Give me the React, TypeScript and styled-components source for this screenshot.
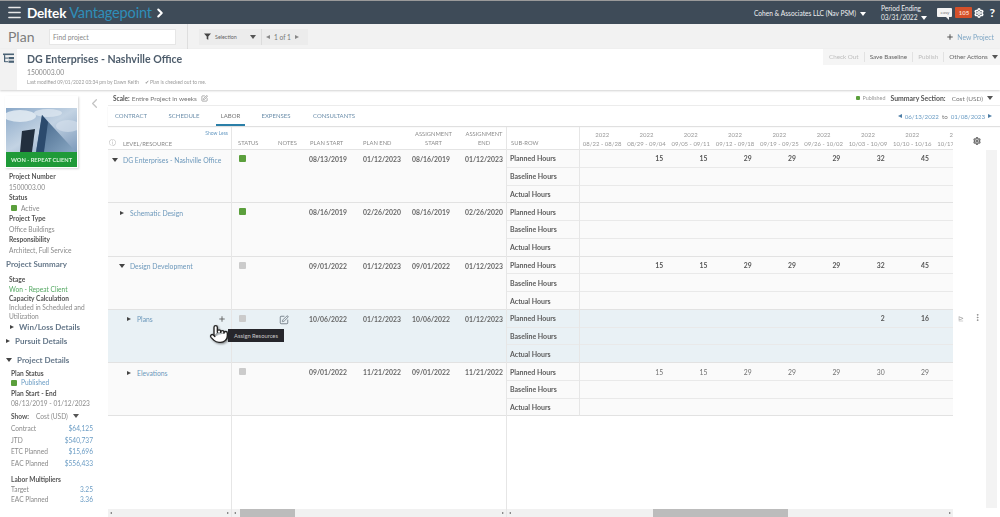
import React from 'react';
import styled, { createGlobalStyle } from 'styled-components';
import {
	ChevronLeft,
	ChevronRight,
	Menu,
	MoreVertical,
	Plus,
	Pointer,
	Settings,
	SquarePen,
} from 'lucide-react';

const GlobalStyle = createGlobalStyle`
	html, body {
		margin: 0;
		padding: 0;
		background: #fff;
	}
	body {
		font-family: Lato, "Noto Sans", Arial, sans-serif;
		color: #555;
	}
	* {
		box-sizing: border-box;
	}
`;

const Page = styled.div`
	display: flex;
	filter: blur(0.35px);
	flex-direction: column;
	height: 517px;
	overflow: hidden;
	position: relative;
	width: 1000px;
`;

/* top bar */
const TopBar = styled.div`
	align-items: center;
	background: #3e4b58;
	border-top: 1px solid #9a9a9a;
	color: #fff;
	display: flex;
	flex: none;
	height: 24px;
	padding: 0 5px 0 6px;
`;

const Brand = styled.div`
	font-size: 13.6px;
	font-weight: 700;
	letter-spacing: -0.2px;
	margin-left: 4px;
	white-space: nowrap;
`;

const BrandBlue = styled.span`
	color: #2f8eb8;
	font-size: 14.6px;
	font-weight: 400;
	margin-left: 3px;
`;

const Spacer = styled.div`
	flex: 1;
`;

const Company = styled.div`
	color: #eef0f2;
	font-size: 6.6px;
	margin-right: 15px;
	white-space: nowrap;
`;

const Period = styled.div`
	color: #eef0f2;
	font-size: 6.6px;
	line-height: 9px;
	margin-right: 10px;
	white-space: nowrap;
`;

const Caret = styled.span`
	border-left: 3px solid transparent;
	border-right: 3px solid transparent;
	border-top: 4px solid ${(props) => props.color || '#fff'};
	display: inline-block;
	margin-left: 4px;
	vertical-align: 0;
`;

const Bubble = styled.div`
	background: #f4f4f4;
	border-radius: 1px;
	color: #777;
	font-size: 4.5px;
	height: 9px;
	line-height: 9px;
	margin-right: 3px;
	position: relative;
	text-align: center;
	width: 15px;
	&::after {
		border-left: 3px solid transparent;
		border-top: 3px solid #f4f4f4;
		bottom: -3px;
		content: '';
		position: absolute;
		right: 3px;
	}
`;

const Badge = styled.div`
	background: #d5502a;
	border-radius: 1px;
	color: #fbd5c4;
	font-size: 6px;
	font-weight: 700;
	height: 11px;
	line-height: 11px;
	margin-right: 2px;
	text-align: center;
	width: 17px;
`;

const Help = styled.div`
	font-size: 12px;
	font-weight: 700;
	margin-left: 5px;
`;

/* plan bar */
const PlanBar = styled.div`
	align-items: center;
	background: #f2f2f2;
	display: flex;
	flex: none;
	height: 25px;
	padding-left: 8px;
`;

const PlanTitle = styled.div`
	color: #7c7c7c;
	font-size: 14px;
	width: 41px;
`;

const Search = styled.div`
	align-items: center;
	background: #fff;
	border: 1px solid #e6e6e6;
	color: #888;
	display: flex;
	font-size: 6.8px;
	height: 16px;
	padding-left: 3px;
	width: 127px;
`;

const Divider = styled.div`
	background: #dedede;
	height: 25px;
	margin: 0 11px;
	width: 1px;
`;

const FilterGroup = styled.div`
	align-items: center;
	background: #ececec;
	color: #666;
	display: flex;
	font-size: 5.4px;
	height: 16px;
	padding: 0 5px 0 5px;
	width: 62px;
`;

const Pager = styled.div`
	align-items: center;
	background: #ececec;
	border-left: 1px solid #dcdcdc;
	color: #777;
	display: flex;
	font-size: 6.6px;
	gap: 4px;
	height: 16px;
	padding-left: 4px;
	width: 47px;
`;

const TriLeft = styled.span`
	border-bottom: 2.5px solid transparent;
	border-right: 4px solid ${(props) => props.color || '#888'};
	border-top: 2.5px solid transparent;
	display: inline-block;
`;

const TriRight = styled.span`
	border-bottom: 2.5px solid transparent;
	border-left: 4px solid ${(props) => props.color || '#888'};
	border-top: 2.5px solid transparent;
	display: inline-block;
`;

const NewProject = styled.div`
	align-items: center;
	color: #7fa6c4;
	display: flex;
	font-size: 6.8px;
	gap: 3px;
	margin-right: 6px;
`;

/* project bar */
const ProjectBar = styled.div`
	background: #fff;
	box-shadow: 0 1px 2px rgba(0, 0, 0, 0.18);
	display: flex;
	flex: none;
	height: 41px;
	position: relative;
`;

const TreeTab = styled.div`
	background: #f2f2f2;
	flex: none;
	height: 41px;
	padding: 4px 0 0 3px;
	width: 17px;
	svg {
		display: block;
	}
`;

const ProjectInfo = styled.div`
	flex: 1;
	padding: 2px 0 0 10px;
`;

const ProjectName = styled.div`
	color: #4e5d6c;
	font-size: 10.6px;
	font-weight: 700;
	line-height: 16px;
`;

const ProjectNumber = styled.div`
	color: #888;
	font-size: 6.8px;
	line-height: 11px;
`;

const Modified = styled.div`
	color: #999;
	display: flex;
	font-size: 4.9px;
	gap: 6px;
	line-height: 9px;
`;

const Actions = styled.div`
	align-items: center;
	align-self: flex-start;
	background: #f5f5f5;
	display: flex;
	font-size: 6.3px;
	height: 16px;
	padding-left: 6px;
	width: 177px;
`;

const Action = styled.div<{ $off?: boolean }>`
	border-right: 1px solid #e2e2e2;
	color: ${(props) => (props.$off ? '#bdbdbd' : '#666')};
	line-height: 10px;
	margin-right: 5px;
	padding-right: 5px;
	white-space: nowrap;
	&:last-child {
		border-right: none;
		margin-right: 0;
		padding-right: 0;
	}
`;

/* body */
const Body = styled.div`
	display: flex;
	flex: 1;
	min-height: 0;
`;

const Sidebar = styled.div`
	flex: none;
	width: 108px;
`;

const SidebarTop = styled.div`
	display: flex;
`;

const HeroCard = styled.div`
	background: #fff;
	box-shadow: 1px 1px 2px rgba(0, 0, 0, 0.16);
	flex: none;
	height: 72px;
	margin: 6px 0 0 5px;
	padding: 12px 1px 0;
	width: 73px;
`;

const Banner = styled.div`
	background: #1f9a38;
	color: #d9f3dc;
	font-size: 5.7px;
	font-weight: 700;
	height: 15px;
	line-height: 15px;
	text-align: center;
	white-space: nowrap;
`;

const Collapse = styled.div`
	color: #c4c4c4;
	margin: 5px 0 0 9px;
`;

const SideBlock = styled.div<{ $left?: number }>`
	padding-left: ${(props) => props.$left ?? 9}px;
	padding-right: 15px;
`;

const SideLabel = styled.div<{ $h?: number; $mt?: number }>`
	color: #555;
	font-size: 6.6px;
	font-weight: 700;
	line-height: ${(props) => props.$h ?? 10.5}px;
	margin-top: ${(props) => props.$mt ?? 0}px;
	white-space: nowrap;
`;

const SideValue = styled.div<{ $h?: number; $color?: string; $inset?: number }>`
	align-items: center;
	color: ${(props) => props.$color || '#8a8a8a'};
	display: flex;
	font-size: 6.6px;
	gap: 4px;
	line-height: ${(props) => props.$h ?? 10.5}px;
	padding-left: ${(props) => props.$inset ?? 0}px;
	white-space: nowrap;
`;

const SectionTitle = styled.div<{ $indent?: number; $h?: number }>`
	align-items: center;
	color: #66788a;
	display: flex;
	font-size: 8px;
	font-weight: 700;
	gap: 5px;
	height: ${(props) => props.$h ?? 17}px;
	padding-left: ${(props) => props.$indent ?? 6}px;
	white-space: nowrap;
`;

const ShowRow = styled.div`
	align-items: center;
	color: #8a8a8a;
	display: flex;
	font-size: 6.6px;
	gap: 5px;
	height: 10px;
	margin: 3px 0 2px;
`;

const MetricRow = styled.div<{ $h?: number }>`
	color: #8a8a8a;
	display: flex;
	font-size: 6.6px;
	height: ${(props) => props.$h ?? 11.7}px;
	justify-content: space-between;
	line-height: ${(props) => props.$h ?? 11.7}px;
`;

const MetricValue = styled.span`
	color: #6a9cc4;
`;

const StatusSquare = styled.span<{ $on?: boolean; $size?: number }>`
	background: ${(props) => (props.$on ? '#5b9f3c' : '#cbcbcb')};
	border-radius: 1px;
	display: inline-block;
	flex: none;
	height: ${(props) => props.$size ?? 7}px;
	width: ${(props) => props.$size ?? 7}px;
`;

/* main */
const Main = styled.div`
	display: flex;
	flex: 1;
	flex-direction: column;
	min-width: 0;
	padding-top: 1px;
`;

const ScaleRow = styled.div`
	align-items: center;
	border-bottom: 1px solid #ececec;
	color: #777;
	display: flex;
	flex: none;
	font-size: 6.5px;
	height: 15px;
	padding: 0 7px 0 5px;
`;

const Strong = styled.b`
	color: #555;
	font-weight: 700;
	margin-right: 2px;
`;

const Published = styled.div`
	align-items: center;
	color: #999;
	display: flex;
	font-size: 5.4px;
	gap: 2px;
	margin-right: 5px;
`;

const TabsRow = styled.div`
	align-items: stretch;
	box-shadow: 0 1px 1px rgba(0, 0, 0, 0.12);
	display: flex;
	flex: none;
	height: 20px;
	padding: 0 8px 0 2px;
`;

const Tab = styled.div<{ $active?: boolean; $width: number }>`
	align-items: center;
	border-bottom: 2px solid transparent;
	border-color: ${(props) => (props.$active ? '#2b7fa8' : 'transparent')};
	color: ${(props) => (props.$active ? '#777' : '#6d8fab')};
	display: flex;
	font-size: 6px;
	height: 20px;
	justify-content: center;
	margin-right: 11px;
	width: ${(props) => props.$width}px;
`;

const DateRange = styled.div`
	align-items: center;
	color: #777;
	display: flex;
	font-size: 6.2px;
	gap: 3px;
`;

const BlueText = styled.span`
	color: #6a9cc4;
`;

const TableArea = styled.div`
	display: flex;
	flex: 1;
	margin-top: 1px;
	min-height: 0;
`;

const Pane = styled.div<{ $width: number; $line?: boolean }>`
	border-right: ${(props) => (props.$line ? '1px solid #e6e6e6' : 'none')};
	display: flex;
	flex: none;
	flex-direction: column;
	overflow: hidden;
	width: ${(props) => props.$width}px;
`;

const HeaderCell = styled.div`
	border-bottom: 1px solid #e4e4e4;
	flex: none;
	height: 23px;
`;

const LevelHeader = styled(HeaderCell)`
	color: #888;
	display: grid;
	font-size: 5.8px;
	grid-template-columns: 15px 1fr;
	grid-template-rows: 11px 12px;
	padding: 0 3px 0 0;
`;

const ShowLess = styled.div`
	color: #6a9cc4;
	font-size: 5px;
	grid-column: 2;
	line-height: 13px;
	text-align: right;
`;

const InfoDot = styled.div`
	align-self: start;
	color: #aaa;
	font-size: 7px;
	grid-row: 2;
	line-height: 8px;
	padding-left: 1px;
`;

const LevelLabel = styled.div`
	align-self: center;
	grid-row: 2;
	line-height: 10px;
`;

const DetailGrid = styled.div`
	display: grid;
	grid-template-columns: 41px 32px 53px 49px 53px 48px;
`;

const DetailHeader = styled(HeaderCell)`
	align-items: end;
	color: #8d8d8d;
	display: grid;
	font-size: 5.8px;
	grid-template-columns: 41px 32px 53px 49px 53px 48px;
	line-height: 8.5px;
	padding-bottom: 2px;
`;

const HeadText = styled.div<{ $center?: boolean; $pad?: number }>`
	padding-left: ${(props) => props.$pad ?? 5}px;
	text-align: ${(props) => (props.$center ? 'center' : 'left')};
	white-space: nowrap;
`;

const Row = styled.div<{ $hover?: boolean }>`
	background: ${(props) => (props.$hover ? '#e9f1f5' : '#fafafa')};
	border-bottom: 1px solid #e2e2e2;
	flex: none;
	height: 53.3px;
`;

const LevelRow = styled(Row)`
	padding: 5px 5px 0 0;
`;

const LevelLine = styled.div<{ $indent: number }>`
	align-items: center;
	color: #6c98bb;
	display: flex;
	font-size: 6.8px;
	height: 9px;
	padding-left: ${(props) => props.$indent}px;
	white-space: nowrap;
`;

const ArrowBox = styled.span`
	align-items: center;
	display: flex;
	flex: none;
	justify-content: center;
	margin-right: 5px;
	width: 6px;
`;

const AddButton = styled.span`
	color: #555;
	display: flex;
	margin-left: auto;
`;

const DetailRow = styled(Row)`
	padding-top: 5px;
`;

const DateCell = styled.div<{ $pad: number }>`
	color: #666;
	font-size: 6.8px;
	font-weight: 700;
	line-height: 9px;
	padding-left: ${(props) => props.$pad}px;
	white-space: nowrap;
`;

const StatusCell = styled.div`
	display: flex;
	height: 9px;
	padding-left: 7px;
`;

const NotesCell = styled.div`
	color: #5a6570;
	display: flex;
	height: 9px;
	padding-left: 6px;
`;

const SubRows = styled(Row)`
	display: flex;
	flex-direction: column;
`;

const SubLabels = styled(SubRows)`
	border-right: 1px solid #e6e6e6;
`;

const SubRow = styled.div`
	align-items: center;
	border-bottom: 1px solid #e9e9e9;
	color: #5c5c5c;
	display: flex;
	flex: 1;
	font-size: 7px;
	font-weight: 700;
	min-height: 0;
	padding-left: 3px;
	white-space: nowrap;
	&:last-child {
		border-bottom: none;
	}
`;

const SubHeader = styled(HeaderCell)`
	align-items: flex-end;
	border-right: 1px solid #e6e6e6;
	color: #8d8d8d;
	display: flex;
	font-size: 5.8px;
	line-height: 8.5px;
	padding: 0 0 2px 4px;
`;

const WeekHeader = styled(HeaderCell)`
	display: grid;
	grid-template-columns: repeat(9, 44.3px);
	padding-top: 3px;
`;

const WeekCell = styled.div`
	color: #999;
	font-size: 6px;
	line-height: 9px;
	text-align: center;
	white-space: nowrap;
`;

const HoursLine = styled.div`
	border-bottom: 1px solid #e9e9e9;
	display: grid;
	flex: 1;
	grid-template-columns: repeat(9, 44.3px);
	min-height: 0;
	&:last-child {
		border-bottom: none;
	}
`;

const HoursCell = styled.div<{ $bold?: boolean }>`
	align-self: center;
	color: ${(props) => (props.$bold ? '#555' : '#707070')};
	font-size: 6.8px;
	font-weight: ${(props) => (props.$bold ? 700 : 400)};
	padding-right: 5.5px;
	text-align: right;
`;

const HScroll = styled.div<{ $from: number; $size: number }>`
	align-items: center;
	background: #f1f1f1;
	display: flex;
	flex: none;
	height: 8px;
	justify-content: space-between;
	margin-top: auto;
	padding: 0 2px;
	position: relative;
	&::before {
		background: #bcbcbc;
		content: '';
		display: ${(props) => (props.$size ? 'block' : 'none')};
		height: 8px;
		left: ${(props) => props.$from}px;
		position: absolute;
		top: 0;
		width: ${(props) => props.$size}px;
	}
`;

const ScrollLeft = styled.span`
	border-bottom: 1.5px solid transparent;
	border-right: 2px solid #666;
	border-top: 1.5px solid transparent;
`;

const ScrollRight = styled.span`
	border-bottom: 1.5px solid transparent;
	border-left: 2px solid #666;
	border-top: 1.5px solid transparent;
`;

const RightRail = styled.div`
	display: flex;
	flex: 1;
	min-width: 0;
	padding-top: 1px;
`;

const RailIcons = styled.div`
	color: #666;
	flex: 1;
`;

const RailGear = styled.div`
	display: flex;
	height: 22px;
	justify-content: center;
	padding: 9px 0 0 14px;
`;

const RailRow = styled.div`
	align-items: center;
	color: #8b8b8b;
	display: flex;
	gap: 9px;
	margin-top: 163px;
	padding-left: 5px;
`;

const ChartGlyph = styled.span`
	color: #a9a9a9;
	font-size: 7px;
	line-height: 8px;
`;

const VScroll = styled.div`
	background: #f3f3f3;
	flex: none;
	height: 358px;
	margin: 22px 3px 0 0;
	position: relative;
	width: 11px;
`;

/* overlays */
const Tooltip = styled.div`
	background: #26262b;
	color: #c9c9c9;
	font-size: 5.8px;
	height: 13px;
	left: 228px;
	line-height: 13px;
	position: absolute;
	text-align: center;
	top: 329px;
	width: 56px;
`;

const HandCursor = styled.div`
	filter: drop-shadow(1px 1px 1px rgba(0, 0, 0, 0.45));
	left: 209px;
	position: absolute;
	top: 324px;
`;

const weeks = [
	'08/22 - 08/28',
	'08/29 - 09/04',
	'09/05 - 09/11',
	'09/12 - 09/18',
	'09/19 - 09/25',
	'09/26 - 10/02',
	'10/03 - 10/09',
	'10/10 - 10/16',
	'10/17 - 10/23',
];

const subRowNames = ['Planned Hours', 'Baseline Hours', 'Actual Hours'];

interface PlanRow {
	name: string;
	indent: number;
	open?: boolean;
	on?: boolean;
	hover?: boolean;
	dates: string[];
	hours: (number | null)[];
	bold?: boolean;
}

const rows: PlanRow[] = [
	{
		name: 'DG Enterprises - Nashville Office',
		indent: 4,
		open: true,
		on: true,
		dates: ['08/13/2019', '01/12/2023', '08/16/2019', '01/12/2023'],
		hours: [null, 15, 15, 29, 29, 29, 32, 45, null],
		bold: true,
	},
	{
		name: 'Schematic Design',
		indent: 11,
		on: true,
		dates: ['08/16/2019', '02/26/2020', '08/16/2019', '02/26/2020'],
		hours: [],
	},
	{
		name: 'Design Development',
		indent: 11,
		open: true,
		dates: ['09/01/2022', '01/12/2023', '09/01/2022', '01/12/2023'],
		hours: [null, 15, 15, 29, 29, 29, 32, 45, null],
		bold: true,
	},
	{
		name: 'Plans',
		indent: 18,
		hover: true,
		dates: ['10/06/2022', '01/12/2023', '10/06/2022', '01/12/2023'],
		hours: [null, null, null, null, null, null, 2, 16, null],
		bold: true,
	},
	{
		name: 'Elevations',
		indent: 18,
		dates: ['09/01/2022', '11/21/2022', '09/01/2022', '11/21/2022'],
		hours: [null, 15, 15, 29, 29, 29, 30, 29, null],
	},
];

const datePads = [4, 5, 5, 5];

function Arrow({ open }: { open?: boolean }) {
	return (
		<ArrowBox>
			{open ? <Caret color="#444" style={{ marginLeft: 0 }} /> : <TriRight color="#444" />}
		</ArrowBox>
	);
}

function TreeIcon() {
	return (
		<svg width="11" height="11" viewBox="0 0 11 11" fill="#4a6275">
			<rect x="0" y="0.5" width="11" height="1.6" />
			<rect x="1" y="2.1" width="1.2" height="7" />
			<rect x="2" y="4.6" width="3" height="1" />
			<rect x="2" y="8.2" width="3" height="1" />
			<rect x="5.5" y="4" width="5.5" height="2.2" />
			<rect x="5.5" y="7.6" width="5.5" height="2.2" />
		</svg>
	);
}

function Building() {
	return (
		<svg width="71" height="44" viewBox="0 0 71 44" style={{ display: 'block' }}>
			<defs>
				<linearGradient id="sky" x1="0" y1="0" x2="1" y2="1">
					<stop offset="0" stopColor="#8aa8c8" />
					<stop offset="0.5" stopColor="#c3d3e3" />
					<stop offset="1" stopColor="#7d9abb" />
				</linearGradient>
				<linearGradient id="glass" x1="0" y1="0" x2="1" y2="1">
					<stop offset="0" stopColor="#3d5f84" />
					<stop offset="1" stopColor="#8ba9c4" />
				</linearGradient>
			</defs>
			<rect width="71" height="44" fill="url(#sky)" />
			<ellipse cx="14" cy="8" rx="16" ry="6" fill="#e4ecf3" opacity="0.85" />
			<ellipse cx="42" cy="5" rx="14" ry="4" fill="#dde7f0" opacity="0.75" />
			<ellipse cx="62" cy="18" rx="12" ry="6" fill="#d6e1ec" opacity="0.65" />
			<polygon points="16,23 29,21 26,44 14,44" fill="#222f3e" />
			<polygon points="36,7 70,44 30,44" fill="url(#glass)" />
			<polygon points="36,7 42,14 38,44 30,44" fill="#2b4a6d" />
		</svg>
	);
}

function ScrollEnds() {
	return (
		<>
			<ScrollLeft />
			<ScrollRight />
		</>
	);
}

export default function App() {
	return (
		<Page>
			<GlobalStyle />
			<TopBar>
				<Menu size={17} strokeWidth={2} color="#e8e8e8" />
				<Brand>
					Deltek<BrandBlue>Vantagepoint</BrandBlue>
				</Brand>
				<ChevronRight size={14} strokeWidth={3.5} style={{ marginLeft: 1 }} />
				<Spacer />
				<Company>
					Cohen &amp; Associates LLC (Nav PSM)
					<Caret />
				</Company>
				<Period>
					Period Ending
					<br />
					03/31/2022
					<Caret />
				</Period>
				<Bubble>easy</Bubble>
				<Badge>105</Badge>
				<Settings size={10} strokeWidth={3.5} />
				<Help>?</Help>
			</TopBar>

			<PlanBar>
				<PlanTitle>Plan</PlanTitle>
				<Search>Find project</Search>
				<Divider />
				<FilterGroup>
					<svg width="7" height="7" viewBox="0 0 7 7" fill="#444" style={{ marginRight: 4 }}>
						<polygon points="0,0.5 7,0.5 4.3,3.6 4.3,6.8 2.7,6 2.7,3.6" />
					</svg>
					Selection
					<Spacer />
					<Caret color="#555" />
				</FilterGroup>
				<Pager>
					<TriLeft />
					1 of 1
					<TriRight />
				</Pager>
				<Spacer />
				<NewProject>
					<Plus size={8} strokeWidth={3} color="#555" />
					New Project
				</NewProject>
			</PlanBar>

			<ProjectBar>
				<TreeTab>
					<TreeIcon />
				</TreeTab>
				<ProjectInfo>
					<ProjectName>DG Enterprises - Nashville Office</ProjectName>
					<ProjectNumber>1500003.00</ProjectNumber>
					<Modified>
						<span>Last modified 09/01/2022 03:34 pm by Dawn Keith</span>
						<span>✔ Plan is checked out to me.</span>
					</Modified>
				</ProjectInfo>
				<Actions>
					<Action $off>Check Out</Action>
					<Action>Save Baseline</Action>
					<Action $off>Publish</Action>
					<Action>
						Other Actions
						<Caret color="#555" />
					</Action>
				</Actions>
			</ProjectBar>

			<Body>
				<Sidebar>
					<SidebarTop>
						<HeroCard>
							<Building />
							<Banner>WON - REPEAT CLIENT</Banner>
						</HeroCard>
						<Collapse>
							<ChevronLeft size={15} strokeWidth={2} />
						</Collapse>
					</SidebarTop>
					<SideBlock>
						<SideLabel $mt={3}>Project Number</SideLabel>
						<SideValue>1500003.00</SideValue>
						<SideLabel>Status</SideLabel>
						<SideValue $inset={2}>
							<StatusSquare $on $size={6} />
							Active
						</SideValue>
						<SideLabel>Project Type</SideLabel>
						<SideValue>Office Buildings</SideValue>
						<SideLabel>Responsibility</SideLabel>
						<SideValue>Architect, Full Service</SideValue>
					</SideBlock>
					<SectionTitle>Project Summary</SectionTitle>
					<SideBlock>
						<SideLabel $mt={2}>Stage</SideLabel>
						<SideValue $h={9} $color="#54a862">
							Won - Repeat Client
						</SideValue>
						<SideLabel $h={9}>Capacity Calculation</SideLabel>
						<SideValue $h={9.5}>Included in Scheduled and</SideValue>
						<SideValue $h={9.5}>Utilization</SideValue>
					</SideBlock>
					<SectionTitle $indent={10} $h={10}>
						<TriRight color="#444" />
						Win/Loss Details
					</SectionTitle>
					<SectionTitle $h={19.5}>
						<TriRight color="#444" />
						Pursuit Details
					</SectionTitle>
					<SectionTitle $h={17}>
						<Caret color="#444" style={{ marginLeft: 0 }} />
						Project Details
					</SectionTitle>
					<SideBlock $left={11}>
						<SideLabel $h={10}>Plan Status</SideLabel>
						<SideValue $h={9} $color="#6a9cc4">
							<StatusSquare $on $size={6} />
							Published
						</SideValue>
						<SideLabel $h={10} $mt={1}>
							Plan Start - End
						</SideLabel>
						<SideValue $h={10}>08/13/2019 - 01/12/2023</SideValue>
						<ShowRow>
							<Strong>Show:</Strong>
							Cost (USD)
							<Caret color="#555" style={{ marginLeft: 0 }} />
						</ShowRow>
						<MetricRow>
							<span>Contract</span>
							<MetricValue>$64,125</MetricValue>
						</MetricRow>
						<MetricRow>
							<span>JTD</span>
							<MetricValue>$540,737</MetricValue>
						</MetricRow>
						<MetricRow>
							<span>ETC Planned</span>
							<MetricValue>$15,696</MetricValue>
						</MetricRow>
						<MetricRow>
							<span>EAC Planned</span>
							<MetricValue>$556,433</MetricValue>
						</MetricRow>
						<SideLabel $h={10} $mt={4}>
							Labor Multipliers
						</SideLabel>
						<MetricRow $h={10.5}>
							<span>Target</span>
							<MetricValue>3.25</MetricValue>
						</MetricRow>
						<MetricRow $h={11.5}>
							<span>EAC Planned</span>
							<MetricValue>3.36</MetricValue>
						</MetricRow>
					</SideBlock>
				</Sidebar>

				<Main>
					<ScaleRow>
						<Strong>Scale:</Strong>
						Entire Project in weeks
						<SquarePen size={7} style={{ marginLeft: 4 }} />
						<Spacer />
						<Published>
							<StatusSquare $on $size={4} />
							Published
						</Published>
						<Strong style={{ fontSize: 6.9, marginRight: 6 }}>Summary Section:</Strong>
						Cost (USD)
						<Caret color="#555" />
					</ScaleRow>
					<TabsRow>
						<Tab $width={42}>CONTRACT</Tab>
						<Tab $width={42}>SCHEDULE</Tab>
						<Tab $width={29} $active>
							LABOR
						</Tab>
						<Tab $width={40}>EXPENSES</Tab>
						<Tab $width={54}>CONSULTANTS</Tab>
						<Spacer />
						<DateRange>
							<TriLeft color="#4d7ea6" />
							<BlueText>06/13/2022</BlueText> to <BlueText>01/08/2023</BlueText>
							<TriRight color="#4d7ea6" />
						</DateRange>
					</TabsRow>
					<TableArea>
						<Pane $width={124} $line>
							<LevelHeader>
								<ShowLess>Show Less</ShowLess>
								<InfoDot>ⓘ</InfoDot>
								<LevelLabel>LEVEL/RESOURCE</LevelLabel>
							</LevelHeader>
							{rows.map((row) => (
								<LevelRow key={row.name} $hover={row.hover}>
									<LevelLine $indent={row.indent}>
										<Arrow open={row.open} />
										{row.name}
										{row.hover && (
											<AddButton>
												<Plus size={8} strokeWidth={2.5} />
											</AddButton>
										)}
									</LevelLine>
								</LevelRow>
							))}
							<HScroll $from={0} $size={0}>
								<ScrollEnds />
							</HScroll>
						</Pane>
						<Pane $width={275} $line>
							<DetailHeader>
								<HeadText $pad={6}>STATUS</HeadText>
								<HeadText>NOTES</HeadText>
								<HeadText>PLAN START</HeadText>
								<HeadText>PLAN END</HeadText>
								<HeadText $center $pad={0}>
									ASSIGNMENT
									<br />
									START
								</HeadText>
								<HeadText $center $pad={0}>
									ASSIGNMENT
									<br />
									END
								</HeadText>
							</DetailHeader>
							{rows.map((row) => (
								<DetailRow key={row.name} $hover={row.hover}>
									<DetailGrid>
										<StatusCell>
											<StatusSquare $on={row.on} />
										</StatusCell>
										<NotesCell>{row.hover && <SquarePen size={10} strokeWidth={1.8} />}</NotesCell>
										{row.dates.map((date, index) => (
											<DateCell key={index} $pad={datePads[index]}>
												{date}
											</DateCell>
										))}
									</DetailGrid>
								</DetailRow>
							))}
							<HScroll $from={8} $size={55}>
								<ScrollEnds />
							</HScroll>
						</Pane>
						<Pane $width={73}>
							<SubHeader>SUB-ROW</SubHeader>
							{rows.map((row) => (
								<SubLabels key={row.name} $hover={row.hover}>
									{subRowNames.map((name) => (
										<SubRow key={name}>{name}</SubRow>
									))}
								</SubLabels>
							))}
							<HScroll $from={0} $size={0}>
								<ScrollLeft />
							</HScroll>
						</Pane>
						<Pane $width={373}>
							<WeekHeader>
								{weeks.map((week) => (
									<WeekCell key={week}>
										2022
										<br />
										{week}
									</WeekCell>
								))}
							</WeekHeader>
							{rows.map((row) => (
								<SubRows key={row.name} $hover={row.hover}>
									<HoursLine>
										{weeks.map((week, index) => (
											<HoursCell key={week} $bold={row.bold}>
												{row.hours[index] ?? ''}
											</HoursCell>
										))}
									</HoursLine>
									<HoursLine />
									<HoursLine />
								</SubRows>
							))}
							<HScroll $from={73} $size={135}>
								<span />
								<ScrollRight />
							</HScroll>
						</Pane>
						<RightRail>
							<RailIcons>
								<RailGear>
									<Settings size={8} strokeWidth={3.5} />
								</RailGear>
								<RailRow>
									<ChartGlyph>⊵</ChartGlyph>
									<MoreVertical size={9} strokeWidth={2.5} />
								</RailRow>
							</RailIcons>
							<VScroll />
						</RightRail>
					</TableArea>
				</Main>
			</Body>

			<HandCursor>
				<Pointer size={20} fill="#fff" color="#222" strokeWidth={1.6} />
			</HandCursor>
			<Tooltip>Assign Resources</Tooltip>
		</Page>
	);
}
